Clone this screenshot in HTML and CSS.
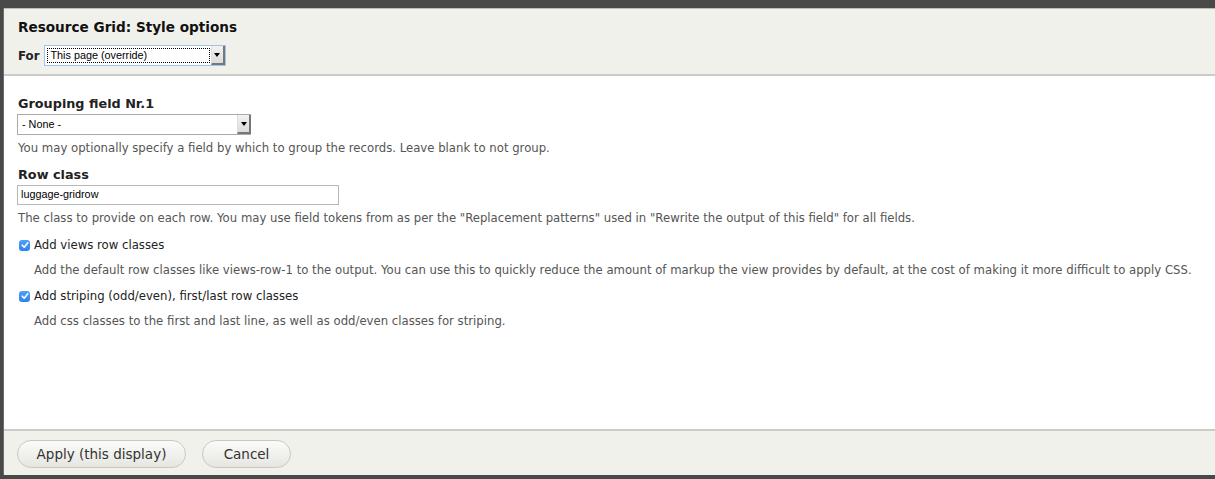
FILE: index.html
```html
<!DOCTYPE html>
<html>
<head>
<meta charset="utf-8">
<link rel="stylesheet" href="styles.css">
</head>
<body>
<div class="dialog">
  <div class="head">
    <h1 class="title">Resource Grid: Style options</h1>
    <div class="for-row">
      <span class="for-label">For</span>
      <div class="select select-focus">
        <div class="select-text"><span class="focus-ring">This page (override)</span></div>
        <div class="select-btn"><span class="arrow"></span></div>
      </div>
    </div>
  </div>
  <div class="body">
    <div class="field">
      <div class="label">Grouping field Nr.1</div>
      <div class="select select-plain">
        <div class="select-text">- None -</div>
        <div class="select-btn"><span class="arrow"></span></div>
      </div>
      <div class="desc">You may optionally specify a field by which to group the records. Leave blank to not group.</div>
    </div>
    <div class="field">
      <div class="label">Row class</div>
      <div class="input">luggage-gridrow</div>
      <div class="desc">The class to provide on each row. You may use field tokens from as per the "Replacement patterns" used in "Rewrite the output of this field" for all fields.</div>
    </div>
    <div class="check">
      <div class="check-row"><span class="box"><svg viewBox="0 0 10 10" width="10" height="10"><path d="M2.2 5.2 L4.2 7.2 L7.8 2.8" fill="none" stroke="#fff" stroke-width="1.6" stroke-linecap="round" stroke-linejoin="round"/></svg></span><span class="check-label">Add views row classes</span></div>
      <div class="desc check-desc">Add the default row classes like views-row-1 to the output. You can use this to quickly reduce the amount of markup the view provides by default, at the cost of making it more difficult to apply CSS.</div>
    </div>
    <div class="check">
      <div class="check-row"><span class="box"><svg viewBox="0 0 10 10" width="10" height="10"><path d="M2.2 5.2 L4.2 7.2 L7.8 2.8" fill="none" stroke="#fff" stroke-width="1.6" stroke-linecap="round" stroke-linejoin="round"/></svg></span><span class="check-label">Add striping (odd/even), first/last row classes</span></div>
      <div class="desc check-desc">Add css classes to the first and last line, as well as odd/even classes for striping.</div>
    </div>
  </div>
  <div class="foot">
    <button class="btn btn-apply">Apply (this display)</button>
    <button class="btn btn-cancel">Cancel</button>
  </div>
</div>
</body>
</html>
```
FILE: styles.css
```css
html, body {
  margin: 0;
  padding: 0;
  background: #494949;
  height: 479px;
  overflow: hidden;
}
body {
  font-family: "DejaVu Sans", "Liberation Sans", sans-serif;
  color: #333;
}
.dialog {
  margin: 8px 0 0 3px;
  height: 467px;
  display: flex;
  flex-direction: column;
  border-left: 1px solid #6a6a6a;
}
.head {
  background: #f1f1ec;
  height: 68px;
  border-bottom: 2px solid #cbcbc8;
  padding: 0 0 0 14px;
  box-sizing: border-box;
  border-top: 1px solid #bdbdb8;
}
.title {
  margin: 0;
  padding-top: 8px;
  font-size: 13.6px;
  line-height: 20px;
  font-weight: bold;
  color: #111;
}
.for-row {
  display: flex;
  align-items: center;
  margin-top: 8px;
  gap: 4px;
}
.for-label {
  font-size: 11.8px;
  font-weight: bold;
  color: #222;
}
.select {
  display: flex;
  height: 21px;
  box-sizing: border-box;
  background: #fff;
}
.select-focus {
  width: 182px;
  border: 1px solid #9fc3ea;
}
.select-plain {
  width: 234px;
  border: 1px solid #aaa;
  border-right: none;
}
.select-text {
  flex: 1;
  font-family: "Liberation Sans", Arial, sans-serif;
  font-size: 10.8px;
  line-height: 17px;
  color: #000;
  padding: 1px 0 0 4px;
}
.select-focus .select-text {
  padding: 2px 0 1px 2px;
}
.focus-ring {
  display: block;
  border: 1px dotted #000;
  height: 15px;
  box-sizing: border-box;
  line-height: 13px;
  padding-left: 3px;
  margin-right: 1px;
}
.select-btn {
  width: 14px;
  background: linear-gradient(#f2f2f2, #dcdcdc);
  border-left: 1px solid #ddd;
  border-right: 2px solid #777;
  border-bottom: 2px solid #777;
  box-sizing: border-box;
  display: flex;
  align-items: center;
  justify-content: center;
}
.arrow {
  width: 0;
  height: 0;
  border-left: 3.5px solid transparent;
  border-right: 3.5px solid transparent;
  border-top: 4px solid #000;
  margin-top: 1px;
}
.body {
  flex: 1;
  background: #fff;
  padding: 20px 0 0 13px;
}
.field {
  margin-bottom: 11px;
}
.label {
  font-size: 12.8px;
  font-weight: bold;
  color: #222;
  line-height: 16px;
  margin-bottom: 2px;
  padding-left: 1px;
}
.input {
  width: 322px;
  height: 20px;
  box-sizing: border-box;
  border: 1px solid #b8b8b8;
  font-family: "Liberation Sans", Arial, sans-serif;
  font-size: 10.8px;
  line-height: 17px;
  color: #000;
  padding-left: 3px;
}
.desc {
  font-size: 11.7px;
  line-height: 16px;
  color: #555;
  margin-top: 5px;
  padding-left: 1px;
}
.check {
  margin-top: 8px;
  padding-left: 1px;
}
.check + .check {
  margin-top: 10px;
}
.check-row {
  display: flex;
  align-items: center;
  gap: 4px;
}
.box {
  width: 11px;
  height: 11px;
  border-radius: 3px;
  background: linear-gradient(#4ea1f7, #2b84ef);
  display: flex;
  align-items: center;
  justify-content: center;
  margin-left: 1px;
}
.check-label {
  font-size: 11.7px;
  color: #222;
  line-height: 16px;
}
.check-desc {
  padding-left: 16px;
  margin-top: 9px;
}
.foot {
  background: #f1f1ec;
  height: 44px;
  border-top: 2px solid #cbcbc8;
  padding: 0 0 0 13px;
  display: flex;
  align-items: center;
  gap: 16px;
}
.btn {
  font-family: "DejaVu Sans", sans-serif;
  font-size: 13.5px;
  color: #333;
  height: 28px;
  border: 1px solid #c8c8c4;
  border-radius: 14px;
  background: linear-gradient(#fbfbf9, #e6e6e1);
  padding: 0;
  margin-top: 2px;
  white-space: nowrap;
}
.btn-apply { width: 169px; }
.btn-cancel { width: 89px; }
```
